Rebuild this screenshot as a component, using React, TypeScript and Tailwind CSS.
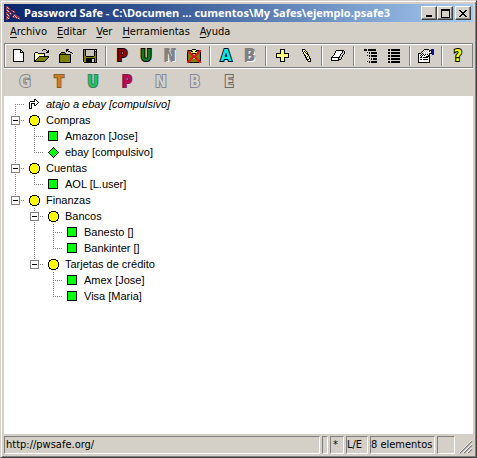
import React from "react";

const palette: Record<string, string> = {
  K: "#000000",
  W: "#ffffff",
  O: "#808000",
  Y: "#ffff80",
  G: "#808080",
  S: "#c8c4bc",
  R: "#e01818",
  B: "#1010a0",
  L: "#00ff00",
  F: "#ffff00",
  M: "#a03848",
  P: "#e8c0c8",
};

/** Draws a small bitmap, one character for each pixel. */
function Pixels({ rows, className = "" }: { rows: string[]; className?: string }) {
  const w = Math.max(...rows.map((r) => r.length));
  return (
    <svg
      width={w}
      height={rows.length}
      viewBox={`0 0 ${w} ${rows.length}`}
      shapeRendering="crispEdges"
      aria-hidden="true"
      className={`shrink-0 ${className}`}
    >
      {rows.flatMap((row, y) =>
        row
          .split("")
          .map((c, x) =>
            palette[c] ? <rect key={`${x}-${y}`} x={x} y={y} width="1" height="1" fill={palette[c]} /> : null
          )
      )}
    </svg>
  );
}

const newDoc = [
  "KKKKKKKK...",
  "KWWWWWWKK..",
  "KWWWWWWKWK.",
  "KWWWWWWKKKK",
  "KWWWWWWWWWK",
  "KWWWWWWWWWK",
  "KWWWWWWWWWK",
  "KWWWWWWWWWK",
  "KWWWWWWWWWK",
  "KWWWWWWWWWK",
  "KWWWWWWWWWK",
  "KWWWWWWWWWK",
  "KKKKKKKKKKK",
];
const openFolder = [
  ".........KKK....",
  "........K...K.K.",
  ".............KK.",
  ".KKK........KKK.",
  "KYWYKKKKKKK.....",
  "KWYWYWYWYWK.....",
  "KYWYWYWYWYK.....",
  "KWYWYKKKKKKKKKK.",
  "KYWYKOOOOOOOOOK.",
  "KWYKOOOOOOOOOK..",
  "KYKOOOOOOOOOK...",
  "KKOOOOOOOOOK....",
  "KKKKKKKKKKK.....",
];
const closeFolder = [
  ".......KKK....",
  ".......KK.....",
  ".......K.KK...",
  "..KKKK.....KK.",
  ".KOOOOK......K",
  "KKKKKKKKKKKK..",
  "KOOOOOOOOOOK..",
  "KOOOOOOOOOOK..",
  "KOOOOOOOOOOK..",
  "KOOOOOOOOOOK..",
  "KOOOOOOOOOOK..",
  "KOOOOOOOOOOK..",
  "KOOOOOOOOOOK..",
  "KKKKKKKKKKKK..",
];
const floppy = [
  "KKKKKKKKKKKKKK",
  "KOKSSSSSSSSKSK",
  "KOKSSSSSSSSKKK",
  "KOKSSSSSSSSKOK",
  "KOKSSSSSSSSKOK",
  "KOKSSSSSSSSKOK",
  "KOKSSSSSSSSKOK",
  "KOOKKKKKKKKOOK",
  "KOOOOOOOOOOOOK",
  "KOOKKKKKKKKKOK",
  "KOOKKKKKKSSKOK",
  "KOOKKKKKKSSKOK",
  "KOOKKKKKKSSKOK",
  ".KKKKKKKKKKKKK",
];
const clearClipboard = [
  ".....KKKK.....",
  "RKKKKYYYYKKKRR",
  "RRROKKYYKKORRR",
  "KRRRYYYYYYRRRK",
  "KORRRKKKKRRROK",
  "KOORRRSSRRROOK",
  "KOOORRRRRROOOK",
  "KOOOORRRROOOOK",
  "KOOORRRRRROOOK",
  "KOORRRSSRRROOK",
  "KORRROOOORRROK",
  "KRRROOOOOORRRK",
  "RRROOOOOOOORRR",
  "RRKKKKKKKKKKRR",
];
const plus = [
  "....KKKKK....",
  "....KYYYK....",
  "....KYYYK....",
  "....KYYYK....",
  "KKKKKYYYKKKKK",
  "KYYYYYYYYYYYK",
  "KYYYYYYYYYYYK",
  "KYYYYYYYYYYYK",
  "KKKKKYYYKKKKK",
  "....KYYYK....",
  "....KYYYK....",
  "....KYYYK....",
  "....KKKKK....",
];
const pencil = [
  "KKK......",
  "KYYK.....",
  "KYKYK....",
  ".KYKYK...",
  ".KYYKK...",
  "..KYYKK..",
  "..KKYYK..",
  "...KYKYK.",
  "...KKYYK.",
  "....KYYKK",
  "....KKKYK",
  ".....KYYK",
  "......KKK",
];
const eraser = [
  ".....KKKKKKKK.",
  "....KWWWWWWKSK",
  "....KWWWWWWKSK",
  "...KWWWWWWKSSK",
  "...KWWWWWKSSK.",
  "..KWWWWWWKSK..",
  ".KWWWWWWKSSK..",
  "KKKKKKKKKSK...",
  "KWWWWWWKSSK...",
  "KWWWWWWKKK....",
  "KKKKKKKK......",
];
const expandAll = [
  "KKK.KKKKKKKK.",
  "KKK.KKKKKKKK.",
  ".............",
  "...K.K.KKKKKK",
  ".....K.KKKKKK",
  ".............",
  "...K.K.KKKKKK",
  ".....K.KKKKKK",
  ".............",
  ".....K.K.KKKK",
  ".......K.KKKK",
  ".............",
  "...K.K.KKKKKK",
  ".....K.KKKKKK",
];
const collapseAll = [
  "KK.KKKKKKKKK",
  "KK.KKKKKKKKK",
  "............",
  "KK.KKKKKKKKK",
  "KK.KKKKKKKKK",
  "............",
  "KK.KKKKKKKKK",
  "KK.KKKKKKKKK",
  "............",
  "KK.KKKKKKKKK",
  "KK.KKKKKKKKK",
  "............",
  "KK.KKKKKKKKK",
  "KK.KKKKKKKKK",
];
const options = [
  "......KKKKK..BBB",
  ".....KWSWSWKKBBB",
  "....KWSWSWWKWKBB",
  "...KWSWSWSWWWKBB",
  "KKKWKSWSWSWKKKBB",
  "KWWKWKWKWKWK..BB",
  "KWKWKWKWWWKK....",
  "KWWKWWWWKKKK....",
  "KWKKWKKKKKWK....",
  "KWWWWWWWWWWK....",
  "KWKKWKKKKKWK....",
  "KWWWWWWWWWWK....",
  "KWWWWWWWWWWK....",
  "KKKKKKKKKKKK....",
];
const appLogo = [
  "MM............",
  "MPM...........",
  "MMPM..........",
  "MM.MM.........",
  "MPM..MM.......",
  ".MPM..MPM.....",
  "MMMMM..MM.....",
  "MM.MPM........",
  "MPM.MM..MM....",
  ".MPM...MPMM...",
  "MMMM..MPMPMMM.",
  "MPMM...MMMPMMM",
  "MMPM......MMPM",
  "MM...........M",
];
const shortcut = [
  ".....KK...",
  ".....KWK..",
  ".KKKKKWWK.",
  "KWWWWWWWWK",
  "KWKKKKWWK.",
  "KWK..KWK..",
  "KWK..KK...",
  "KWK.......",
  "KWK.......",
  "KKK.......",
];
const greenBox = ["KKKKKKKKKK", ...Array(8).fill("KLLLLLLLLK"), "KKKKKKKKKK"];
const diamond = [
  ".....K.....",
  "....KLK....",
  "...KLLLK...",
  "..KLLLLLK..",
  ".KLLLLLLLK.",
  "KLLLLLLLLLK",
  ".KLLLLLLLK.",
  "..KLLLLLK..",
  "...KLLLK...",
  "....KLK....",
  ".....K.....",
];
const group = [
  "...KKKKK...",
  ".KKFFFFFKK.",
  ".KFFFFFFFK.",
  "KFFFFFFFFFK",
  "KFFFFFFFFFK",
  "KFFFFFFFFFK",
  "KFFFFFFFFFK",
  "KFFFFFFFFFK",
  ".KFFFFFFFK.",
  ".KKFFFFFKK.",
  "...KKKKK...",
];
const minus = [
  "GGGGGGGGG",
  "GWWWWWWWG",
  "GWWWWWWWG",
  "GWWWWWWWG",
  "GWKKKKKWG",
  "GWWWWWWWG",
  "GWWWWWWWG",
  "GWWWWWWWG",
  "GGGGGGGGG",
];
const minimizeGlyph = ["......", "......", "......", "......", "......", "......", "KKKKKK", "KKKKKK"];
const maximizeGlyph = [
  "KKKKKKKKK",
  "KKKKKKKKK",
  "K.......K",
  "K.......K",
  "K.......K",
  "K.......K",
  "K.......K",
  "K.......K",
  "KKKKKKKKK",
];
const closeGlyph = ["KK....KK", ".KK..KK.", "..KKKK..", "...KK...", "..KKKK..", ".KK..KK.", "KK....KK"];

const letterBase = "font-['DejaVu_Sans'] font-bold [paint-order:stroke]";

function Letter({ children, className }: { children: string; className: string }) {
  return <span className={`${letterBase} text-[16px] leading-4 ${className}`}>{children}</span>;
}

type Tool = { label: string; icon: React.ReactNode };

const toolGroups: Tool[][] = [
  [
    { label: "Nuevo", icon: <Pixels rows={newDoc} /> },
    { label: "Abrir", icon: <Pixels rows={openFolder} /> },
    { label: "Cerrar", icon: <Pixels rows={closeFolder} /> },
    { label: "Guardar", icon: <Pixels rows={floppy} /> },
  ],
  [
    { label: "Copiar contraseña", icon: <Letter className="text-[#900000] [-webkit-text-stroke:2px_#000]">P</Letter> },
    { label: "Copiar usuario", icon: <Letter className="text-[#008020] [-webkit-text-stroke:2px_#000]">U</Letter> },
    {
      label: "Copiar notas",
      icon: <Letter className="text-[#808080] [-webkit-text-stroke:2px_#808080] [text-shadow:1px_1px_0_#fff]">N</Letter>,
    },
    { label: "Limpiar portapapeles", icon: <Pixels rows={clearClipboard} /> },
  ],
  [
    { label: "Autotecleo", icon: <Letter className="text-[#00e8e8] [-webkit-text-stroke:2px_#000]">A</Letter> },
    {
      label: "Ir a la URL",
      icon: <Letter className="text-[#808080] [-webkit-text-stroke:2px_#808080] [text-shadow:1px_1px_0_#fff]">B</Letter>,
    },
  ],
  [
    { label: "Añadir", icon: <Pixels rows={plus} /> },
    { label: "Editar entrada", icon: <Pixels rows={pencil} /> },
  ],
  [{ label: "Borrar", icon: <Pixels rows={eraser} /> }],
  [
    { label: "Expandir todo", icon: <Pixels rows={expandAll} /> },
    { label: "Contraer todo", icon: <Pixels rows={collapseAll} /> },
  ],
  [{ label: "Opciones", icon: <Pixels rows={options} /> }],
  [{ label: "Ayuda", icon: <Letter className="text-[#ffff00] [-webkit-text-stroke:2px_#000]">?</Letter> }],
];

const dragLetters = [
  { letter: "G", label: "Arrastrar grupo", style: "text-[#d4d0c8] [-webkit-text-stroke:2px_#888888]" },
  { letter: "T", label: "Arrastrar título", style: "text-[#d08020] [-webkit-text-stroke:2px_#886030]" },
  { letter: "U", label: "Arrastrar usuario", style: "text-[#20c060] [-webkit-text-stroke:2px_#408060]" },
  { letter: "P", label: "Arrastrar contraseña", style: "text-[#c00050] [-webkit-text-stroke:2px_#782850]" },
  { letter: "N", label: "Arrastrar notas", style: "text-[#d4d0c8] [-webkit-text-stroke:2px_#888898]" },
  { letter: "B", label: "Arrastrar URL", style: "text-[#d4d0c8] [-webkit-text-stroke:2px_#888898]" },
  { letter: "E", label: "Arrastrar correo", style: "text-[#d4d0c8] [-webkit-text-stroke:2px_#686868]" },
];

/** "|" through line, "+" branch, "L" last branch, "r" first branch, " " empty. */
type Row = { lines: string; open?: boolean; icon: string[]; text: string; italic?: boolean };

const entries: Row[] = [
  { lines: "r", icon: shortcut, text: "atajo a ebay [compulsivo]", italic: true },
  { lines: "+", open: true, icon: group, text: "Compras" },
  { lines: "|+", icon: greenBox, text: "Amazon [Jose]" },
  { lines: "|L", icon: diamond, text: "ebay [compulsivo]" },
  { lines: "+", open: true, icon: group, text: "Cuentas" },
  { lines: "|L", icon: greenBox, text: "AOL [L.user]" },
  { lines: "L", open: true, icon: group, text: "Finanzas" },
  { lines: " +", open: true, icon: group, text: "Bancos" },
  { lines: " |+", icon: greenBox, text: "Banesto []" },
  { lines: " |L", icon: greenBox, text: "Bankinter []" },
  { lines: " L", open: true, icon: group, text: "Tarjetas de crédito" },
  { lines: "  +", icon: greenBox, text: "Amex [Jose]" },
  { lines: "  L", icon: greenBox, text: "Visa [Maria]" },
];

function Connector({ kind }: { kind: string }) {
  const top = kind === "r" ? 8 : 0;
  const bottom = kind === "L" ? 8 : 16;
  return (
    <svg width="19" height="16" viewBox="0 0 19 16" shapeRendering="crispEdges" aria-hidden="true">
      <g stroke="#808080" strokeDasharray="1 1">
        {kind !== " " && <line x1="9.5" y1={top} x2="9.5" y2={bottom} />}
        {"r+L".includes(kind) && <line x1="9" y1="8.5" x2="19" y2="8.5" />}
      </g>
    </svg>
  );
}

function TreeRow({ row }: { row: Row }) {
  const cells = row.lines.split("");
  return (
    <li role="treeitem" aria-level={cells.length} aria-expanded={row.open} className="flex h-4 items-center">
      {cells.map((kind, i) =>
        row.open && i === cells.length - 1 ? (
          <button key={i} type="button" aria-label={`Contraer ${row.text}`} className="grid h-4 w-[19px] shrink-0">
            <span className="col-start-1 row-start-1">
              <Connector kind={kind} />
            </span>
            <span className="col-start-1 row-start-1 flex h-[17px] items-center justify-center">
              <Pixels rows={minus} />
            </span>
          </button>
        ) : (
          <Connector key={i} kind={kind} />
        )
      )}
      <span className="flex h-4 w-[19px] shrink-0 items-center">
        <Pixels rows={row.icon} className="ml-1" />
      </span>
      <span className={`pl-0.5 whitespace-nowrap ${row.italic ? "italic" : ""}`}>{row.text}</span>
    </li>
  );
}

function CaptionButton({ label, rows, className = "" }: { label: string; rows: string[]; className?: string }) {
  return (
    <button
      type="button"
      aria-label={label}
      className={`flex h-[14px] w-4 shrink-0 items-center justify-center border border-t-white border-r-[#404040] border-b-[#404040] border-l-white bg-[#d4d0c8] shadow-[inset_-1px_-1px_0_#808080] ${className}`}
    >
      <Pixels rows={rows} />
    </button>
  );
}

const menus = ["Archivo", "Editar", "Ver", "Herramientas", "Ayuda"];

const pane = "flex h-full items-center border border-t-[#808080] border-r-white border-b-white border-l-[#808080] whitespace-nowrap";

export default function App() {
  return (
    <div className="flex h-screen w-full flex-col overflow-hidden border border-t-[#d4d0c8] border-r-[#404040] border-b-[#404040] border-l-[#d4d0c8] bg-[#d4d0c8] p-[3px] font-['DejaVu_Sans_Condensed','DejaVu_Sans',sans-serif] text-[11px] font-stretch-condensed text-black shadow-[inset_1px_1px_0_#fff,inset_-1px_-1px_0_#808080]">
      <header className="flex h-[18px] shrink-0 items-center bg-linear-to-r from-[#0a246a] to-[#a6caf0] pr-0.5 pl-0.5">
        <Pixels rows={appLogo} />
        <h1 className="min-w-0 flex-1 truncate pl-1 font-['Open_Sans','DejaVu_Sans_Condensed',sans-serif] text-[11px] font-bold font-stretch-normal text-white">
          Password Safe - C:\Documen ... cumentos\My Safes\ejemplo.psafe3
        </h1>
        <CaptionButton label="Minimizar" rows={minimizeGlyph} />
        <CaptionButton label="Maximizar" rows={maximizeGlyph} />
        <CaptionButton label="Cerrar ventana" rows={closeGlyph} className="ml-0.5" />
      </header>

      <nav className="flex h-[21px] shrink-0 items-center pl-px">
        {menus.map((m) => (
          <button key={m} type="button" className="px-[5px]">
            <span className="underline underline-offset-2">{m[0]}</span>
            {m.slice(1)}
          </button>
        ))}
      </nav>

      <div
        role="toolbar"
        aria-label="Principal"
        className="flex h-[25px] shrink-0 items-center border border-[#808080] px-px shadow-[inset_1px_1px_0_#fff,0_1px_0_#fff]"
      >
        {toolGroups.map((tools, i) => (
          <div key={i} className="flex items-center">
            {i > 0 && <span className="mx-[3px] h-5 w-0.5 border-r border-l border-r-white border-l-[#808080]" />}
            {tools.map((t) => (
              <button key={t.label} type="button" aria-label={t.label} className="flex h-5 w-6 items-center justify-center">
                {t.icon}
              </button>
            ))}
          </div>
        ))}
      </div>

      <div role="toolbar" aria-label="Arrastrar" className="flex h-7 shrink-0 items-center px-1">
        {dragLetters.map((d) => (
          <button key={d.letter} type="button" aria-label={d.label} className="flex h-6 w-[34px] items-center justify-center">
            <span className={`${letterBase} text-[15px] leading-4 ${d.style}`}>{d.letter}</span>
          </button>
        ))}
      </div>

      <main className="min-h-0 flex-1 overflow-hidden bg-white pl-0.5 font-['Liberation_Sans',Arial,sans-serif]">
        <ul role="tree" aria-label="Entradas">
          {entries.map((row) => (
            <TreeRow key={row.text} row={row} />
          ))}
        </ul>
      </main>

      <footer className="flex h-5 shrink-0 gap-0.5 pt-0.5">
        <div className={`${pane} min-w-0 flex-1 pl-px`}>http://pwsafe.org/</div>
        <div className={`${pane} w-1.5`} />
        <div className={`${pane} w-3.5 pl-0.5`}>*</div>
        <div className={`${pane} w-[22px]`}>L/E</div>
        <div className={`${pane} w-[65px]`}>8 elementos</div>
        <div className={`${pane} w-[18px]`} />
        <svg width="16" height="18" viewBox="0 0 16 18" aria-hidden="true" className="shrink-0">
          <path d="M3 17 15 5M7 17l8-8M11 17l4-4" stroke="#808080" strokeWidth="1.5" />
          <path d="M2 17 15 4M6 17l9-9M10 17l5-5" stroke="#fff" strokeWidth="0.8" />
        </svg>
      </footer>
    </div>
  );
}
